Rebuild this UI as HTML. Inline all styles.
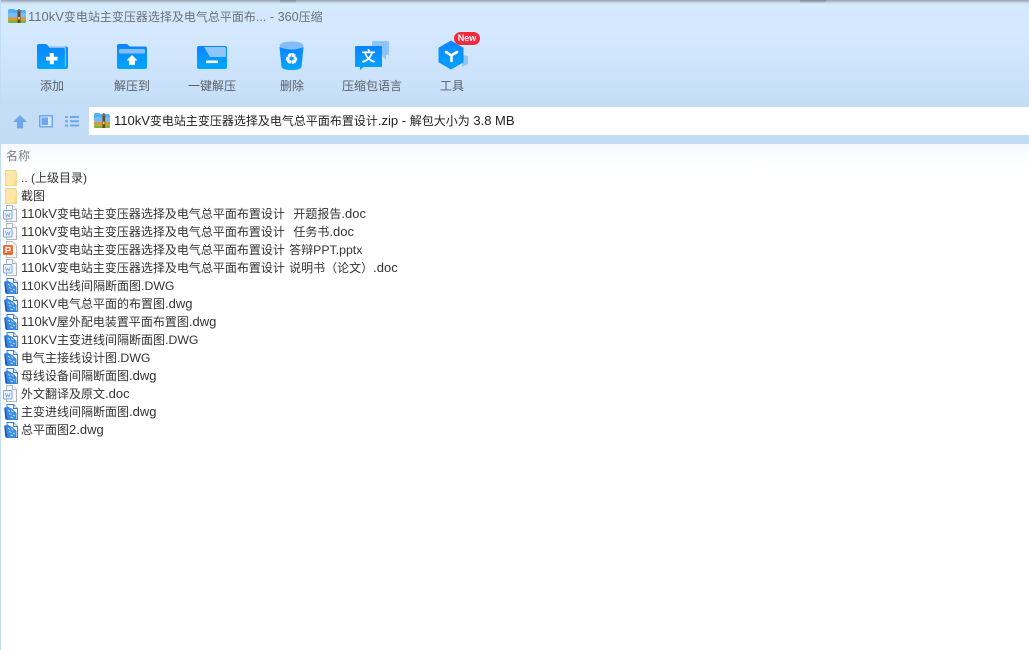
<!DOCTYPE html>
<html><head><meta charset="utf-8">
<style>
*{margin:0;padding:0;box-sizing:border-box}
html,body{width:1029px;height:650px;overflow:hidden;background:#fff}
body{position:relative;font-family:"Liberation Sans","Noto Sans CJK SC",sans-serif;font-size:12px;color:#333}
.top{position:absolute;left:0;top:0;width:1029px;height:144px;background:linear-gradient(#d6eafe 0,#d3e8fe 40px,#c4ddf7 106px,#c3dcf6 144px)}
.shadow{position:absolute;left:0;top:0;width:1029px;height:4px;background:linear-gradient(#97a3b1,#c8d8ea 70%,#d6eafe)}
.dk{position:absolute;top:0;height:3px;opacity:.5;background:linear-gradient(#5f6873,rgba(140,150,165,0))}
.hdr{position:absolute;left:0;top:144px;width:1029px;height:24px;background:linear-gradient(#f6faff,#fff)}
.edge{position:absolute;left:0;top:0;width:1px;height:650px;background:#c3dcf6}
.addr{position:absolute;left:89px;top:107px;width:940px;height:28px;background:#fff}
.t{position:absolute;white-space:pre;line-height:18px}
.lab{position:absolute;top:77px;height:18px;line-height:18px;color:#5a5f66;text-align:center;white-space:nowrap;font-size:12px}
.row{position:absolute;left:21px;white-space:pre;line-height:18px;height:18px;color:#333;font-size:12px}
.l{font-size:13px;word-spacing:.6px}
.u{font-size:12.3px}
.m{font-size:12.6px}
.n{font-size:13px}
svg{position:absolute;overflow:visible}
</style></head><body>
<div class="top"></div><div class="shadow"></div>
<div class="dk" style="left:280px;width:16px"></div><div class="dk" style="left:800px;width:26px"></div>
<div class="addr"></div><div class="hdr"></div><div class="edge"></div>

<svg width="0" height="0" style="position:absolute">
<defs>
<linearGradient id="bl" x1="0" y1="0" x2="0" y2="1"><stop offset="0" stop-color="#0c84ff"/><stop offset="1" stop-color="#00a6ff"/></linearGradient>
<symbol id="zip" viewBox="0 0 18 14" preserveAspectRatio="none"><path d="M0 2Q0 0 2 0H6L7.500 1H16Q18 1 18 3V9H0Z" fill="#56aef2"/><path d="M0 4H18V9H0Z" fill="#74bdf6"/><rect x="0" y="8.600" width="18" height="2.800" fill="#f09228"/><path d="M0 11.400H18V13Q18 14 17 14H1Q0 14 0 13Z" fill="#74b83a"/><rect x="9.500" y="1" width="3" height="13" fill="#73451c"/><rect x="10" y="0" width="2" height="2.500" fill="#3f86d2"/><rect x="10" y="8" width="2" height="2.500" fill="#e2bd58"/></symbol>
<symbol id="fo" viewBox="0 0 12 16"><path d="M.5.500H10.500L11.500 3V15.500H.5Z" fill="#fde7a8" stroke="#f2d68c"/><path d="M8 15L11 5V15Z" fill="#fbdc8b"/></symbol>
<symbol id="doc" viewBox="0 0 14 17"><path d="M3.500.5H9.500L13.500 4.500V16.500H3.500Z" fill="#f6f6f8" stroke="#b0b4bb"/><path d="M9.500.5V4.500H13.500" fill="#fff" stroke="#b0b4bb"/><rect x=".5" y="5.500" width="8.500" height="8.500" rx="1" fill="#f2f7fe" stroke="#74a6e6"/><path d="M2.300 8L3.500 12L4.800 9.200L6 12L7.200 8" fill="none" stroke="#6c9fe2" stroke-width=".8"/></symbol>
<symbol id="ppt" viewBox="0 0 14 17"><path d="M3.500.5H9.500L13.500 4.500V16.500H3.500Z" fill="#f7f8fa" stroke="#c2c2c2"/><rect x="0" y="4" width="10" height="10" rx="1.500" fill="#ef6a32"/><path d="M3 12V6.500H7V9.500H3.500" fill="none" stroke="#fff" stroke-width="1.300"/></symbol>
<symbol id="dwg" viewBox="0 0 14 16"><path d="M3 .5H9.500L13.500 4.500V15.500H3Z" fill="#fff" stroke="#3a7fd6"/><path d="M9.500.5V4.500H13.500" fill="#d6e8fb" stroke="#3a7fd6"/><path d="M.5 3.500L3.500 2.500L9 5.500L12.500 9V15.500H1.500Z" fill="#3589e4"/><path d="M.2 4L1.200 3.700L3.500 15.500H1.500Z" fill="#1a56b0"/><path d="M4 6L6 7.500M5 9.500L7.500 10.500M7 6.500L9.500 8.500M6.500 13L9 13.800M9 11L11 12" stroke="#b5dafa" stroke-width="1.100" fill="none"/></symbol>
</defs>
</svg>

<!-- Title bar -->
<svg style="left:8px;top:9px" width="18" height="14"><use href="#zip" width="18" height="14"/></svg>
<div class="t" style="left:28px;top:8px;color:#6b7078;font-size:12px"><span class="n">110kV</span>变电站主变压器选择及电气总平面布<span class="m">... - 360</span>压缩</div>

<!-- Toolbar -->
<svg style="left:37px;top:44px" width="32" height="26" viewBox="0 0 32 26">
<path d="M0 2Q0 0 2 0H9L12 2.500H29Q31 2.500 31 4.500V23Q31 25 29 25H2Q0 25 0 23Z" fill="url(#bl)"/>
<path d="M11 2.500H27Q29 2.500 29 4.500V22.500H27.800V5Q27.800 4 26.500 4H12.500Z" fill="#7fbdfd"/>
<path d="M9 12.800H12.800V9H16.800V12.800H20.500V16.500H16.800V20.200H12.800V16.500H9Z" fill="#fff"/>
</svg>
<svg style="left:117px;top:44px" width="32" height="26" viewBox="0 0 32 26">
<path d="M0 2Q0 0 2 0H10L13 2.500H28Q30 2.500 30 4.500V23Q30 25 28 25H2Q0 25 0 23Z" fill="url(#bl)"/>
<path d="M2 9.500V7Q2 5 4 5H26Q28 5 28 7V9.500Z" fill="#83c0fb"/>
<path d="M15 11L20.500 16.500H18V21H12V16.500H9.500Z" fill="#fff"/>
</svg>
<svg style="left:197px;top:46px" width="31" height="24" viewBox="0 0 31 24">
<path d="M0 2Q0 0 2 0H28Q30 0 30 2V21Q30 23 28 23H2Q0 23 0 21Z" fill="url(#bl)"/>
<path d="M7 1H27Q29 1 29 3V11H13Z" fill="#8cc6fd"/>
<rect x="9" y="14.500" width="12" height="2.600" fill="#fff"/>
</svg>
<svg style="left:279px;top:41px" width="26" height="30" viewBox="0 0 26 30">
<ellipse cx="12.500" cy="4.500" rx="12" ry="4" fill="#83bdf8"/>
<path d="M.5 6Q12.500 11 24.500 6L22.500 26Q21 29 12.500 29Q4 29 2.500 26Z" fill="url(#bl)"/>
<text x="12.500" y="23" text-anchor="middle" font-family="'DejaVu Sans',sans-serif" font-size="15" fill="#fff" stroke="#fff" stroke-width=".5">♻</text>
</svg>
<svg style="left:354px;top:41px" width="36" height="30" viewBox="0 0 36 30">
<path d="M18 1.500Q18 0 19.500 0H33.500Q35 0 35 1.500V12.500Q35 14 33.500 14H32V19L28 14H18Z" fill="#8cc4fc"/>
<path d="M1 6Q1 5 2 5H27Q28 5 28 6V25Q28 26 27 26H9.500L6 29V26H2Q1 26 1 25Z" fill="url(#bl)"/>
<text x="14.500" y="20.500" text-anchor="middle" font-family="'Liberation Sans','Noto Sans CJK SC',sans-serif" font-size="14" font-weight="700" fill="#fff">文</text>
</svg>
<svg style="left:438px;top:40px" width="34" height="30" viewBox="0 0 34 30">
<path d="M24 15L30 16V24L24 27Z" fill="#8cc4fc"/>
<path d="M13 1L25 8V22L13 29L1 22V8Z" fill="url(#bl)" stroke="#0c90ff" stroke-linejoin="round"/>
<path d="M8 12L13.500 15.500L19 12M13.500 15.500V21" fill="none" stroke="#fff" stroke-width="2.600" stroke-linecap="round"/>
</svg>
<div style="position:absolute;left:454px;top:32px;width:26px;height:13px;background:#f5283c;border-radius:7px;color:#fff;font-size:9px;line-height:13px;text-align:center;font-weight:700">New</div>

<div class="lab" style="left:22px;width:60px">添加</div>
<div class="lab" style="left:102px;width:60px">解压到</div>
<div class="lab" style="left:172px;width:80px">一键解压</div>
<div class="lab" style="left:262px;width:60px">删除</div>
<div class="lab" style="left:332px;width:80px">压缩包语言</div>
<div class="lab" style="left:422px;width:60px">工具</div>

<!-- Nav icons -->
<svg style="left:13px;top:115px" width="14" height="14" viewBox="0 0 14 14"><path d="M7 0L14 7H10V13.500H4V7H0Z" fill="#6ea7ec"/></svg>
<svg style="left:39px;top:115px" width="14" height="13" viewBox="0 0 14 13"><rect x=".75" y=".75" width="12.500" height="11" fill="#d6e8fc" stroke="#6ea7ec" stroke-width="1.500"/><rect x="2.500" y="2.500" width="6.500" height="7.500" fill="#6ea7ec"/></svg>
<svg style="left:65px;top:116px" width="14" height="11" viewBox="0 0 14 11"><path d="M0 0H3V2H0ZM5 0H14V2H5ZM0 4.200H3V6.200H0ZM5 4.200H14V6.200H5ZM0 8.500H3V10.500H0ZM5 8.500H14V10.500H5Z" fill="#6ea7ec"/></svg>

<!-- Address bar -->
<svg style="left:94px;top:113px" width="16" height="15"><use href="#zip" width="16" height="15"/></svg>
<div class="t" style="left:114px;top:112px;color:#222;font-size:12px"><span class="n">110kV</span>变电站主变压器选择及电气总平面布置设计<span class="n">.zip - </span>解包大小为<span class="n"> 3.8 MB</span></div>

<div class="t" style="left:6px;top:147px;color:#7c7f84;font-size:12px">名称</div>

<!-- File list -->
<svg style="left:5px;top:170px" width="12" height="16"><use href="#fo" width="12" height="16"/></svg>
<div class="row" style="top:169px">.. (上级目录)</div>
<svg style="left:5px;top:188px" width="12" height="16"><use href="#fo" width="12" height="16"/></svg>
<div class="row" style="top:187px">截图</div>
<svg style="left:3px;top:205px" width="14" height="17"><use href="#doc" width="14" height="17"/></svg>
<div class="row" style="top:205px"><span class="l">110kV</span>变电站主变压器选择及电气总平面布置设计<span class="l">  </span>开题报告<span class="l">.doc</span></div>
<svg style="left:3px;top:223px" width="14" height="17"><use href="#doc" width="14" height="17"/></svg>
<div class="row" style="top:223px"><span class="l">110kV</span>变电站主变压器选择及电气总平面布置设计<span class="l">  </span>任务书<span class="l">.doc</span></div>
<svg style="left:3px;top:241px" width="14" height="17"><use href="#ppt" width="14" height="17"/></svg>
<div class="row" style="top:241px"><span class="l">110kV</span>变电站主变压器选择及电气总平面布置设计<span class="l"> </span>答辩<span class="u">PPT.pptx</span></div>
<svg style="left:3px;top:259px" width="14" height="17"><use href="#doc" width="14" height="17"/></svg>
<div class="row" style="top:259px"><span class="l">110kV</span>变电站主变压器选择及电气总平面布置设计<span class="l"> </span>说明书（论文）<span class="l">.doc</span></div>
<svg style="left:4px;top:278px" width="14" height="16"><use href="#dwg" width="14" height="16"/></svg>
<div class="row" style="top:277px"><span class="u">110KV</span>出线间隔断面图<span class="u">.DWG</span></div>
<svg style="left:4px;top:296px" width="14" height="16"><use href="#dwg" width="14" height="16"/></svg>
<div class="row" style="top:295px"><span class="u">110KV</span>电气总平面的布置图<span class="l">.dwg</span></div>
<svg style="left:4px;top:314px" width="14" height="16"><use href="#dwg" width="14" height="16"/></svg>
<div class="row" style="top:313px"><span class="l">110kV</span>屋外配电装置平面布置图<span class="l">.dwg</span></div>
<svg style="left:4px;top:332px" width="14" height="16"><use href="#dwg" width="14" height="16"/></svg>
<div class="row" style="top:331px"><span class="u">110KV</span>主变进线间隔断面图<span class="u">.DWG</span></div>
<svg style="left:4px;top:350px" width="14" height="16"><use href="#dwg" width="14" height="16"/></svg>
<div class="row" style="top:349px">电气主接线设计图<span class="u">.DWG</span></div>
<svg style="left:4px;top:368px" width="14" height="16"><use href="#dwg" width="14" height="16"/></svg>
<div class="row" style="top:367px">母线设备间隔断面图<span class="l">.dwg</span></div>
<svg style="left:3px;top:385px" width="14" height="17"><use href="#doc" width="14" height="17"/></svg>
<div class="row" style="top:385px">外文翻译及原文<span class="l">.doc</span></div>
<svg style="left:4px;top:404px" width="14" height="16"><use href="#dwg" width="14" height="16"/></svg>
<div class="row" style="top:403px">主变进线间隔断面图<span class="l">.dwg</span></div>
<svg style="left:4px;top:422px" width="14" height="16"><use href="#dwg" width="14" height="16"/></svg>
<div class="row" style="top:421px">总平面图<span class="l">2.dwg</span></div>
</body></html>
